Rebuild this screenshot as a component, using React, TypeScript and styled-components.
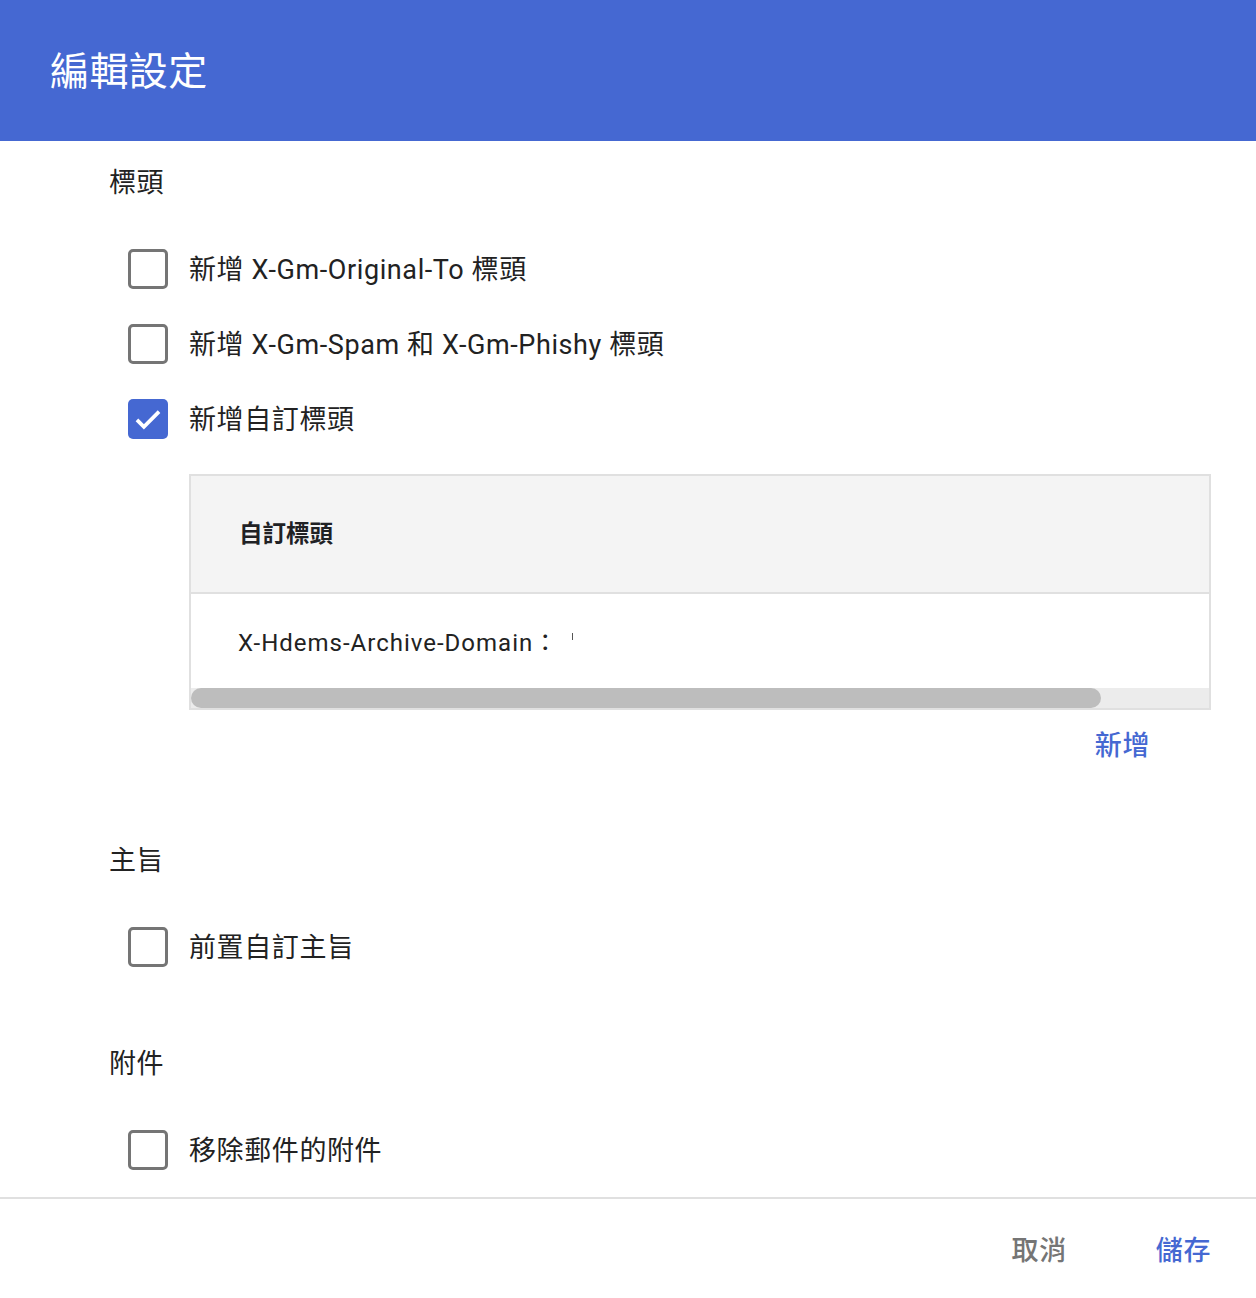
import styled, { createGlobalStyle } from "styled-components";

const GlobalStyle = createGlobalStyle`
  html, body {
    margin: 0;
    padding: 0;
    background: #fff;
  }
  body {
    font-family: Roboto, "Noto Sans CJK TC", "Noto Sans", sans-serif;
    color: #222;
  }
`;

const BLUE = "#4568d2";

const Dialog = styled.div`
  width: 1256px;
  height: 1298px;
  display: flex;
  flex-direction: column;
  background: #fff;
`;

const TopBar = styled.div`
  height: 141px;
  flex-shrink: 0;
  background: ${BLUE};
  display: flex;
  align-items: center;
  padding-left: 50px;
  padding-bottom: 6px;
  box-sizing: border-box;
`;

const Title = styled.h1`
  margin: 0;
  font-size: 39px;
  font-weight: 400;
  color: #fff;
  letter-spacing: 0.4px;
`;

const Body = styled.div`
  height: 1056px;
  overflow: hidden;
  padding: 22px 45px 0 109px;
  box-sizing: border-box;
`;

const Section = styled.section<{ $gap?: number }>`
  margin-top: ${(p) => p.$gap ?? 0}px;
`;

const SectionLabel = styled.div`
  font-size: 27px;
  line-height: 40px;
  color: #222;
  letter-spacing: 0.4px;
`;

const Rows = styled.div`
  margin-top: 28px;
  padding-left: 19px;
`;

const Row = styled.label`
  height: 75px;
  display: flex;
  align-items: center;
  gap: 21px;
  font-size: 27px;
  letter-spacing: 0.6px;
  color: #222;
`;

const RowText = styled.span`
  margin-top: -3px;
`;

const Box = styled.span<{ $checked?: boolean }>`
  width: 40px;
  height: 40px;
  box-sizing: border-box;
  border-radius: 5px;
  border: ${(p) => (p.$checked ? "none" : "3px solid #757575")};
  background: ${(p) => (p.$checked ? BLUE : "#fff")};
  display: flex;
  align-items: center;
  justify-content: center;
  flex-shrink: 0;
`;

const TableWrap = styled.div`
  margin: 18px 0 0 80px;
  border: 2px solid #e0e0e0;
  height: 236px;
  box-sizing: border-box;
  display: flex;
  flex-direction: column;
`;

const HeadRow = styled.div`
  height: 118px;
  flex-shrink: 0;
  background: #f4f4f4;
  border-bottom: 2px solid #e0e0e0;
  display: flex;
  align-items: center;
  padding-left: 48px;
  padding-bottom: 4px;
  box-sizing: border-box;
  font-size: 23.5px;
  font-weight: 700;
  color: #202124;
`;

const BodyRow = styled.div`
  height: 94px;
  flex-shrink: 0;
  display: flex;
  align-items: center;
  padding-left: 47px;
  padding-bottom: 2px;
  box-sizing: border-box;
  font-size: 24px;
  letter-spacing: 1px;
  color: #222;
`;

const Tick = styled.span`
  display: inline-block;
  width: 1px;
  height: 7px;
  background: #555;
  margin-left: 14px;
  margin-top: -8px;
`;

const ScrollTrack = styled.div`
  height: 20px;
  flex-shrink: 0;
  background: #ececec;
  display: flex;
`;

const ScrollThumb = styled.div`
  width: 910px;
  height: 20px;
  border-radius: 10px;
  background: #bdbdbd;
`;

const AddLine = styled.div`
  display: flex;
  justify-content: flex-end;
  padding-right: 61px;
  margin-top: 16px;
  padding-bottom: 15px;
`;

const TextButton = styled.button<{ $tone?: "blue" | "grey" }>`
  border: none;
  background: none;
  padding: 0;
  font-family: inherit;
  font-size: 27px;
  line-height: 40px;
  font-weight: 500;
  letter-spacing: 0.6px;
  color: ${(p) => (p.$tone === "grey" ? "#757575" : BLUE)};
  cursor: pointer;
`;

const Footer = styled.div`
  flex: 1;
  border-top: 2px solid #e0e0e0;
  display: flex;
  align-items: center;
  justify-content: flex-end;
  gap: 89px;
  padding: 4px 45px 0 0;
`;

const Check = ({ checked }: { checked?: boolean }) => (
  <Box $checked={checked}>
    {checked && (
      <svg width="34" height="34" viewBox="0 0 24 24">
        <path
          d="M4.2 12.6l4.9 4.9L19.8 6.8"
          fill="none"
          stroke="#fff"
          strokeWidth="2.6"
        />
      </svg>
    )}
  </Box>
);

const App = () => {
  return (
    <Dialog>
      <GlobalStyle />
      <TopBar>
        <Title>編輯設定</Title>
      </TopBar>

      <Body>
        <Section>
          <SectionLabel>標頭</SectionLabel>
          <Rows>
            <Row>
              <Check />
              <RowText>新增 X-Gm-Original-To 標頭</RowText>
            </Row>
            <Row>
              <Check />
              <RowText>新增 X-Gm-Spam 和 X-Gm-Phishy 標頭</RowText>
            </Row>
            <Row>
              <Check checked />
              <RowText>新增自訂標頭</RowText>
            </Row>
          </Rows>

          <TableWrap>
            <HeadRow>自訂標頭</HeadRow>
            <BodyRow>
              X-Hdems-Archive-Domain：
              <Tick />
            </BodyRow>
            <ScrollTrack>
              <ScrollThumb />
            </ScrollTrack>
          </TableWrap>

          <AddLine>
            <TextButton>新增</TextButton>
          </AddLine>
        </Section>

        <Section $gap={60}>
          <SectionLabel>主旨</SectionLabel>
          <Rows>
            <Row>
              <Check />
              <RowText>前置自訂主旨</RowText>
            </Row>
          </Rows>
        </Section>

        <Section $gap={60}>
          <SectionLabel>附件</SectionLabel>
          <Rows>
            <Row>
              <Check />
              <RowText>移除郵件的附件</RowText>
            </Row>
          </Rows>
        </Section>
      </Body>

      <Footer>
        <TextButton $tone="grey">取消</TextButton>
        <TextButton>儲存</TextButton>
      </Footer>
    </Dialog>
  );
};

export default App;
